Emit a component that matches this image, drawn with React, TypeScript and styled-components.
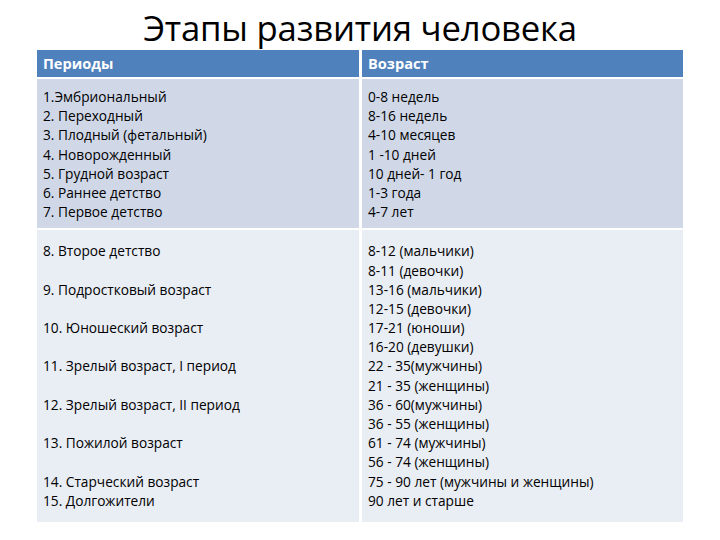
import { FC } from 'react'
import styled, { createGlobalStyle } from 'styled-components'

const GlobalStyle = createGlobalStyle`
  body {
    margin: 0;
    background: #ffffff;
    font-family: 'Open Sans', 'Liberation Sans', sans-serif;
  }
`

const Page = styled.div`
  width: 720px;
  height: 540px;
  display: flex;
  flex-direction: column;
  align-items: center;
  overflow: hidden;
`

const Title = styled.h1`
  margin: 6px 0 0;
  height: 44px;
  font-weight: 400;
  font-size: 34.7px;
  line-height: 44px;
  color: #000;
  letter-spacing: -0.2px;
`

const Table = styled.div`
  width: 646px;
  display: grid;
  grid-template-columns: 322px 321px;
  column-gap: 3px;
  row-gap: 2px;
`

const Cell = styled.div<{ $kind: 'head' | 'odd' | 'even' }>`
  background: ${p => (p.$kind === 'head' ? '#4f81bd' : p.$kind === 'odd' ? '#d0d8e8' : '#e9edf4')};
  color: ${p => (p.$kind === 'head' ? '#ffffff' : '#000000')};
  font-weight: ${p => (p.$kind === 'head' ? 700 : 400)};
  font-size: ${p => (p.$kind === 'head' ? '14.6px' : '13.7px')};
  line-height: ${p => (p.$kind === 'head' ? '27px' : '19.2px')};
  padding: ${p => (p.$kind === 'head' ? '0 6px' : p.$kind === 'odd' ? '8px 6px 7px' : '11px 6px 12px')};
  white-space: pre;
`

const Line = styled.div`
  height: 19.2px;
`

const lines = (items: string[]) => items.map((t, i) => <Line key={i}>{t}</Line>)

const App: FC = () => {
  return (
    <Page>
      <GlobalStyle />
      <Title>Этапы развития человека</Title>
      <Table>
        <Cell $kind='head'>Периоды</Cell>
        <Cell $kind='head'>Возраст</Cell>
        <Cell $kind='odd'>
          {lines([
            '1.Эмбриональный',
            '2. Переходный',
            '3. Плодный (фетальный)',
            '4. Новорожденный',
            '5. Грудной возраст',
            '6. Раннее детство',
            '7. Первое детство',
          ])}
        </Cell>
        <Cell $kind='odd'>
          {lines(['0-8 недель', '8-16 недель', '4-10 месяцев', '1 -10 дней', '10 дней- 1 год', '1-3 года', '4-7 лет'])}
        </Cell>
        <Cell $kind='even'>
          {lines([
            '8. Второе детство',
            '',
            '9. Подростковый возраст',
            '',
            '10. Юношеский возраст',
            '',
            '11. Зрелый возраст, I период',
            '',
            '12. Зрелый возраст, II период',
            '',
            '13. Пожилой возраст',
            '',
            '14. Старческий возраст',
            '15. Долгожители',
          ])}
        </Cell>
        <Cell $kind='even'>
          {lines([
            '8-12 (мальчики)',
            '8-11 (девочки)',
            '13-16 (мальчики)',
            '12-15 (девочки)',
            '17-21 (юноши)',
            '16-20 (девушки)',
            '22 - 35(мужчины)',
            '21 - 35 (женщины)',
            '36 - 60(мужчины)',
            '36 - 55 (женщины)',
            '61 - 74 (мужчины)',
            '56 - 74 (женщины)',
            '75 - 90 лет (мужчины и женщины)',
            '90 лет и старше',
          ])}
        </Cell>
      </Table>
    </Page>
  )
}

export default App
